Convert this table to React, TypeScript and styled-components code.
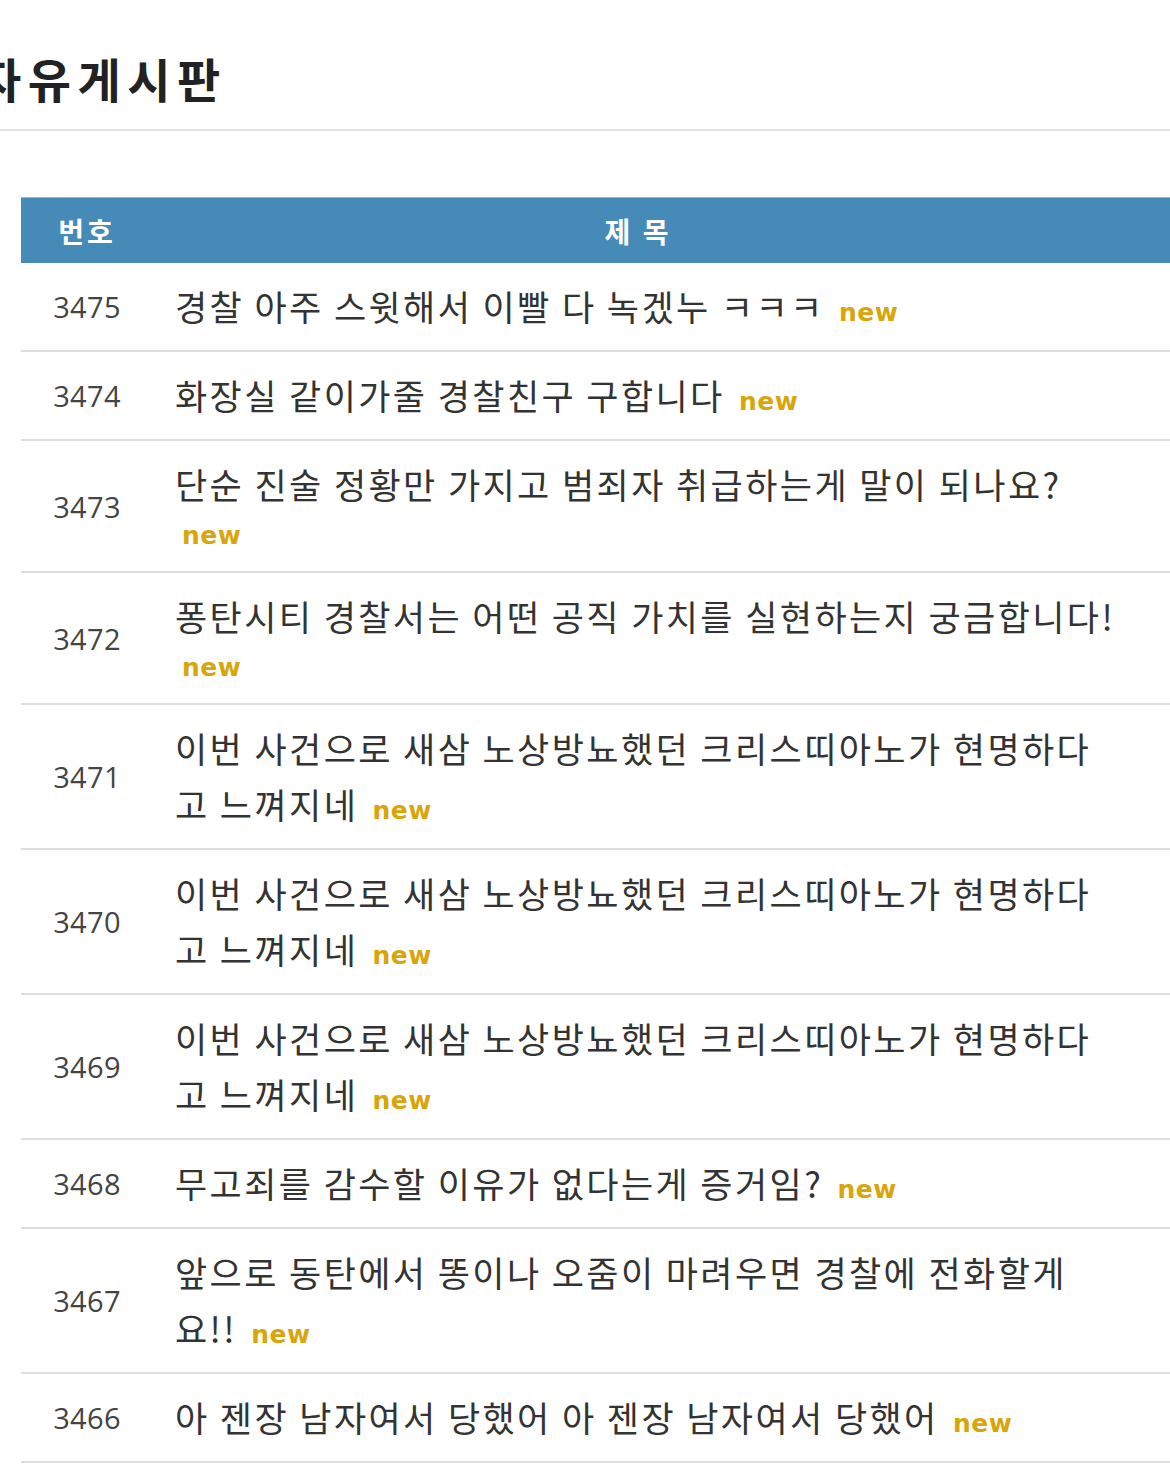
import React from "react";
import styled, { createGlobalStyle } from "styled-components";

const GlobalStyle = createGlobalStyle`
  html, body {
    margin: 0;
    padding: 0;
    background: #fff;
    overflow-x: hidden;
  }
  body {
    font-family: "Open Sans", "Noto Sans CJK KR", sans-serif;
    color: #333;
  }
`;

const Page = styled.div({ width: "1170px" });

const BoardTitle = styled.h1({
  margin: 0,
  padding: "43px 0 17px",
  textIndent: "-22px",
  fontFamily: '"Noto Sans CJK KR", sans-serif',
  fontSize: "47px",
  fontWeight: 700,
  letterSpacing: "6.5px",
  lineHeight: "normal",
  color: "#222",
  borderBottom: "2px solid #e3e3e3",
});

const Board = styled.div({ margin: "66px 0 0 21px" });

const cols = "132px 970px 1fr";

const HeadRow = styled.div({
  display: "grid",
  gridTemplateColumns: cols,
  alignItems: "center",
  height: "65px",
  borderTop: "1px solid #8bb7d4",
  background: "#468bb8",
  color: "#fff",
  fontFamily: '"Noto Sans CJK KR", sans-serif',
  fontSize: "28px",
  fontWeight: 700,
  letterSpacing: "3px",
});

const HeadCell = styled.div({ textAlign: "center" });

const Row = styled.div({
  display: "grid",
  gridTemplateColumns: cols,
  alignItems: "center",
  borderBottom: "2px solid #dedede",
});

const Num = styled.div({
  textAlign: "center",
  fontFamily: '"Open Sans", sans-serif',
  fontSize: "29px",
  letterSpacing: "0.3px",
  color: "#444",
});

const SubjectCell = styled.div({
  padding: "15px 0 16px 22px",
  fontSize: "28px",
  lineHeight: "43px",
});

const Subject = styled.span({
  fontFamily: '"Noto Sans CJK KR", sans-serif',
  fontSize: "35px",
  letterSpacing: "2.4px",
  lineHeight: "56px",
  color: "#333",
});

const NewBadge = styled.span({
  marginLeft: "7px",
  fontFamily: '"DejaVu Sans", sans-serif',
  fontSize: "25px",
  fontWeight: 700,
  lineHeight: 1,
  letterSpacing: "0.5px",
  color: "#d8a50a",
});

const posts = [
  { no: 3475, title: "경찰 아주 스윗해서 이빨 다 녹겠누 ㅋㅋㅋ" },
  { no: 3474, title: "화장실 같이가줄 경찰친구 구합니다" },
  { no: 3473, title: "단순 진술 정황만 가지고 범죄자 취급하는게 말이 되나요?" },
  { no: 3472, title: "퐁탄시티 경찰서는 어떤 공직 가치를 실현하는지 궁금합니다!" },
  { no: 3471, title: "이번 사건으로 새삼 노상방뇨했던 크리스띠아노가 현명하다고 느껴지네" },
  { no: 3470, title: "이번 사건으로 새삼 노상방뇨했던 크리스띠아노가 현명하다고 느껴지네" },
  { no: 3469, title: "이번 사건으로 새삼 노상방뇨했던 크리스띠아노가 현명하다고 느껴지네" },
  { no: 3468, title: "무고죄를 감수할 이유가 없다는게 증거임?" },
  { no: 3467, title: "앞으로 동탄에서 똥이나 오줌이 마려우면 경찰에 전화할게요!!" },
  { no: 3466, title: "아 젠장 남자여서 당했어 아 젠장 남자여서 당했어" },
];

const App = () => (
  <Page>
    <GlobalStyle />
    <BoardTitle>자유게시판</BoardTitle>
    <Board>
      <HeadRow>
        <HeadCell>번호</HeadCell>
        <HeadCell>제 목</HeadCell>
        <div />
      </HeadRow>
      {posts.map((p) => (
        <Row key={p.no}>
          <Num>{p.no}</Num>
          <SubjectCell>
            <Subject>{p.title}</Subject> <NewBadge>new</NewBadge>
          </SubjectCell>
          <div />
        </Row>
      ))}
    </Board>
  </Page>
);

export default App;
